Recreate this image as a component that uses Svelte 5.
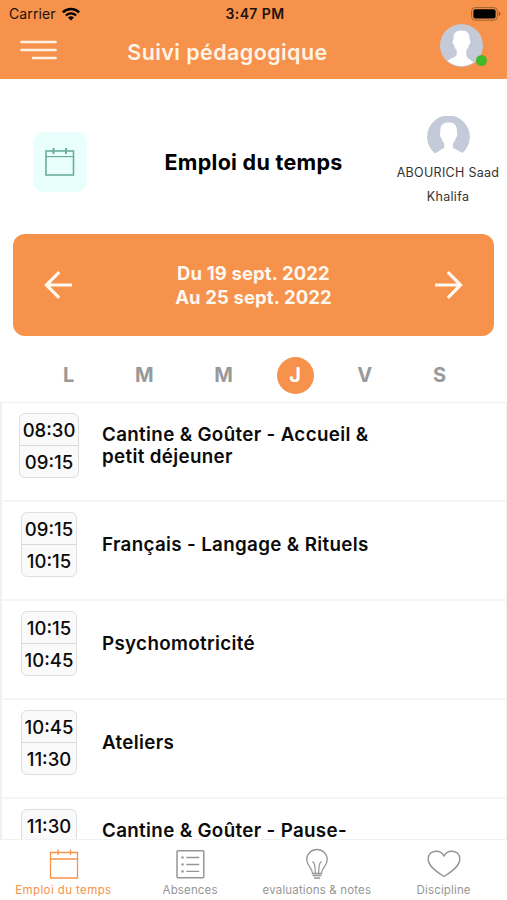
<script>
	let activeDay = 3;
	let activeTab = 'calendar';

	const days = ['L', 'M', 'M', 'J', 'V', 'S'];

	const lessons = [
		{ start: '08:30', end: '09:15', lines: ['Cantine & Goûter - Accueil &', 'petit déjeuner'] },
		{ start: '09:15', end: '10:15', lines: ['Français - Langage & Rituels'] },
		{ start: '10:15', end: '10:45', lines: ['Psychomotricité'] },
		{ start: '10:45', end: '11:30', lines: ['Ateliers'] },
		{ start: '11:30', end: '', lines: ['Cantine & Goûter - Pause-', ''] }
	];

	const tabs = [
		{ id: 'calendar', label: 'Emploi du temps' },
		{ id: 'absences', label: 'Absences' },
		{ id: 'notes', label: 'evaluations & notes' },
		{ id: 'discipline', label: 'Discipline' }
	];
</script>

<div class="app">
	<header>
		<div class="status">
			<span class="carrier">
				<span class="carrier-name">Carrier</span>
				<svg width="20" height="14" viewBox="0 0 20 14">
					<path d="M1.9 5.3a11.6 11.6 0 0 1 16.2 0" fill="none" stroke="#000" stroke-width="2.5" />
					<path d="M4.9 8.5a7.3 7.3 0 0 1 10.2 0" fill="none" stroke="#000" stroke-width="2.3" />
					<path d="M7 10.6a4.3 4.3 0 0 1 6 0l-3 3z" />
				</svg>
			</span>
			<span class="clock">3:47 PM</span>
			<svg class="battery" width="30" height="14" viewBox="0 0 30 14">
				<rect x=".6" y=".6" width="25.8" height="12.6" rx="3.5" fill="none" stroke="#a0602f" />
				<rect x="2.4" y="2.3" width="22.2" height="9.2" rx="2" />
				<path d="M27.8 4.8c2 .5 2 3.8 0 4.3z" fill="#8b5228" />
			</svg>
		</div>
		<div class="bar">
			<svg class="menu" width="37" height="20" viewBox="0 0 37 20">
				<path d="M1.4 2H35.6M1.4 9.9H35.6M13 18H35.6" stroke="#fff2e4" stroke-width="2.5" stroke-linecap="round" />
			</svg>
			<h1>Suivi pédagogique</h1>
			<div class="account">
				<svg width="43" height="43" viewBox="0 0 43 43">
					<circle cx="21.5" cy="21.5" r="21.5" fill="#c5cad8" />
					<path d="M21.5 6.5c-6 0-8.500 3.200-8 9-.2 1-1.200 1-.9 3 .3 1.800 1.300 1.800 1.600 3 .4 2 1.300 3.500 2.500 4.500v4.200c0 3-6.200 3.800-9.200 6.800a21.500 21.500 0 0 0 26 1.200c-3-2.500-7.200-4.500-7.200-8v-4.200c1.200-1 2.100-2.500 2.500-4.500.3-1.200 1.300-1.200 1.600-3 .3-2-.7-2-.9-3 .5-5.800-2-9-8-9z" fill="#fff" />
				</svg>
				<span class="online"></span>
			</div>
		</div>
	</header>

	<section class="heading">
		<div class="tile">
			<svg width="30" height="30" viewBox="0 0 30 30" fill="none" stroke="#69ae9d">
				<rect x="1" y="4" width="27.5" height="24" stroke-width="1.6" />
				<path d="M1 9.600H28.500" stroke-width="1.2" />
				<path d="M8.500 1v6M21 1v6" stroke-width="2" />
			</svg>
		</div>
		<h2>Emploi du temps</h2>
		<div class="pupil">
			<svg width="43" height="38" viewBox="0 0 43 38">
				<path d="M8 37.500A21.400 21.400 0 1 1 35.500 37l-9.200-5c-.6-.4-.6-4 .2-5.500 1.300-1.500 2-3 2.300-4.600 1.500-1 1.900-3.500 1-5.200.8-7-2-10.200-8.200-10.200s-9 3.200-8.200 10.200c-.9 1.700-.5 4.200 1 5.200.3 1.600 1 3.100 2.300 4.600.7 1.500.8 5.100.2 5.500z" fill="#c5cad8" />
			</svg>
			<p><span class="line">ABOURICH Saad</span> <span class="line">Khalifa</span></p>
		</div>
	</section>

	<section class="week">
		<svg width="28" height="28" viewBox="0 0 28 28">
			<path d="M28 14H2.500M15.200 1.200L2.400 14l12.800 12.800" />
		</svg>
		<p><span class="line">Du 19 sept. 2022</span> <span class="line">Au 25 sept. 2022</span></p>
		<svg width="28" height="28" viewBox="0 0 28 28">
			<path d="M0 14H25.500M12.800 1.200L25.600 14 12.800 26.800" />
		</svg>
	</section>

	<nav class="days">
		{#each days as day, i}
			<button class="day" class:active={i === activeDay} on:click={() => (activeDay = i)}>{day}</button>
		{/each}
	</nav>

	<main>
		{#each lessons as lesson}
			<article>
				<div class="slot">
					<div class="times">
						<span>{lesson.start}</span>
						<span>{lesson.end}</span>
					</div>
				</div>
				<h3>
					{#each lesson.lines as line}
						<span class="line">{line}</span>
					{/each}
				</h3>
			</article>
		{/each}
	</main>

	<nav class="tabs">
		{#each tabs as tab}
			<button class="tab" class:active={tab.id === activeTab} on:click={() => (activeTab = tab.id)}>
				<svg width="34" height="32" viewBox="0 0 34 32" fill="none" stroke="currentColor">
					{#if tab.id === 'calendar'}
						<path d="M4.500 4.500H31.500V30H4.500zM4.500 11H31.500M12 1.500v5.500M24.500 1.500v5.500" stroke-width="1.3" />
					{:else if tab.id === 'absences'}
						<rect x="4" y="2.7" width="26.800" height="27" rx="1" stroke-width="1.5" />
						<path d="M13.300 9.500H26.300M13.300 16.500H26.300M13.300 23.300H26.300" stroke-width="1.3" />
						<path d="M8.300 9.500h2.400M8.300 16.500h2.400M8.300 23.300h2.400" stroke-width="2.2" />
					{:else if tab.id === 'notes'}
						<path d="M12.500 25.500c0-6-5.800-7.500-5.800-14a10.300 10 0 0 1 20.600 0c0 6.500-5.800 8-5.800 14zM12.500 27.500h9M14 30h6" stroke-width="1.3" />
						<path d="M15.300 25.500c0-5-.3-8-1.300-10.500l-1.500-1.500M18.700 25.500c0-5 .3-8 1.300-10.500l1.500-1.500" stroke-width="1.2" />
					{:else}
						<path d="M17 28.500C9 23.500 1.200 18 1.200 11 1.200 2.500 12.800.5 17 8 21.200.5 32.800 2.500 32.800 11c0 7-7.800 12.500-15.800 17.500z" stroke-width="1.4" />
					{/if}
				</svg>
				<span>{tab.label}</span>
			</button>
		{/each}
	</nav>
</div>

<style>
	:global(body) {
		margin: 0;
		background: #fff;
	}

	.app {
		width: 507px;
		height: 900px;
		display: flex;
		flex-direction: column;
		overflow: hidden;
		background: #fff;
		color: #0b0b0b;
		font-family: Inter, 'Open Sans', sans-serif;
	}

	h1,
	h2,
	h3,
	p {
		margin: 0;
		white-space: nowrap;
	}

	svg {
		display: block;
		flex: none;
	}

	button {
		border: 0;
		padding: 0;
		background: none;
		font-family: inherit;
	}

	.line {
		display: block;
	}

	header {
		flex: none;
		height: 79px;
		box-sizing: border-box;
		background: #f6924b;
	}

	.status {
		display: grid;
		grid-template-columns: 1fr auto 1fr;
		align-items: center;
		height: 27px;
		padding: 0 6px 0 9px;
		font-size: 14px;
		color: #20130b;
	}

	.carrier {
		display: flex;
		align-items: center;
		gap: 5px;
	}

	.carrier-name {
		letter-spacing: 0.1px;
	}

	.clock {
		font-weight: 600;
		letter-spacing: 0.4px;
	}

	.battery {
		justify-self: end;
	}

	.bar {
		display: grid;
		grid-template-columns: 80px 1fr 106px;
		align-items: center;
		height: 46px;
	}

	.menu {
		margin-left: 20px;
	}

	h1 {
		margin: 4px 26px 0 0;
		text-align: center;
		font-size: 21.5px;
		font-weight: 600;
		letter-spacing: 0.42px;
		color: #fff4e8;
	}

	.account {
		position: relative;
		width: 43px;
		margin-left: 39px;
		margin-top: -9px;
	}

	.online {
		position: absolute;
		right: -4px;
		bottom: 1px;
		width: 11px;
		height: 11px;
		border-radius: 50%;
		background: #43b82b;
	}

	.heading {
		flex: none;
		display: grid;
		grid-template-columns: 118px 1fr 118px;
		align-items: center;
		height: 155px;
	}

	.tile {
		display: flex;
		align-items: center;
		justify-content: center;
		width: 54px;
		height: 60px;
		margin: 10px 0 0 33px;
		border-radius: 11px;
		background: #e8fffb;
	}

	h2 {
		margin-top: 10px;
		text-align: center;
		font-size: 21.5px;
		font-weight: 700;
		letter-spacing: 0.28px;
		color: #000;
	}

	.pupil {
		display: flex;
		flex-direction: column;
		align-items: center;
		margin-top: 12px;
		font-size: 12.5px;
		letter-spacing: 0.3px;
		color: #333;
		text-align: center;
	}

	.pupil p {
		margin-top: 7px;
		line-height: 24px;
	}

	.week {
		flex: none;
		display: flex;
		align-items: center;
		justify-content: space-between;
		box-sizing: border-box;
		height: 102px;
		margin: 0 13px;
		padding: 0 31px;
		border-radius: 12px;
		background: #f6924b;
		color: #fff8f0;
	}

	.week svg path {
		fill: none;
		stroke: #fff8f0;
		stroke-width: 3.2;
	}

	.week p {
		text-align: center;
		font-size: 18.5px;
		font-weight: 700;
		line-height: 24px;
		letter-spacing: 0.12px;
	}

	.days {
		flex: none;
		display: flex;
		align-items: center;
		justify-content: space-between;
		height: 66px;
		padding: 12px 44px 0 46px;
		box-sizing: border-box;
	}

	.day {
		padding: 0 17px;
		height: 37px;
		font-size: 20px;
		font-weight: 700;
		color: #999;
	}

	.day.active {
		width: 37px;
		padding: 0;
		border-radius: 50%;
		background: #f6924b;
		color: #fff;
	}

	main {
		flex: 1;
		min-height: 0;
		overflow: hidden;
		border: 1px solid #f1f1f1;
		border-left: 2px solid #f1f1f1;
	}

	article {
		display: flex;
		align-items: center;
		box-sizing: border-box;
		height: 99px;
		padding: 10px 0 22px;
		border-bottom: 2px solid #f5f5f5;
	}

	.slot {
		display: flex;
		justify-content: center;
		width: 94px;
		margin-right: 6px;
	}

	.times {
		box-sizing: border-box;
		min-width: 56px;
		border: 1.5px solid #dedede;
		border-radius: 6px;
		background: #fafafa;
		font-size: 18.5px;
		font-weight: 500;
		text-align: center;
	}

	.times span {
		display: block;
		height: 31px;
		padding: 0 3px;
		line-height: 32px;
	}

	.times span + span {
		border-top: 1px solid #d8d8d8;
	}

	h3 {
		font-size: 18.8px;
		font-weight: 600;
		line-height: 22px;
		letter-spacing: 0.33px;
	}

	h3 .line {
		height: 22px;
	}

	.tabs {
		flex: none;
		display: grid;
		grid-template-columns: repeat(4, 1fr);
		height: 60px;
	}

	.tab {
		display: flex;
		flex-direction: column;
		align-items: center;
		gap: 2px;
		padding-top: 8px;
		font-size: 11.5px;
		line-height: 16px;
		letter-spacing: 0.15px;
		white-space: nowrap;
		color: #969696;
	}

	.tab.active {
		letter-spacing: 0.4px;
		color: #f6924b;
	}
</style>
